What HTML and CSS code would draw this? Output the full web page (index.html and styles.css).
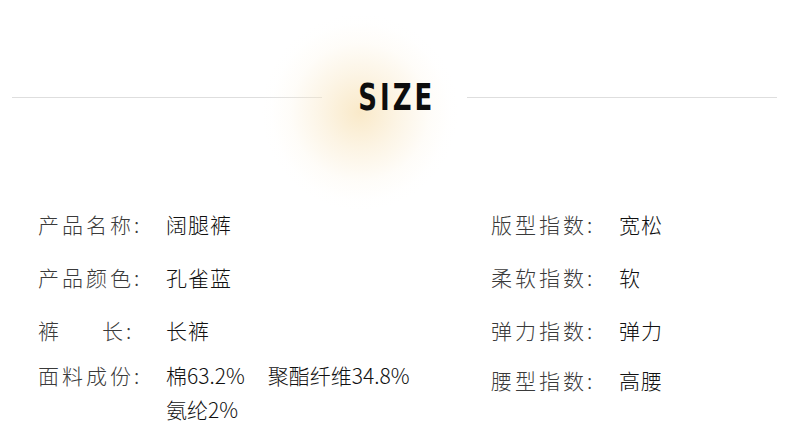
FILE: index.html
```html
<!DOCTYPE html>
<html lang="zh-CN">
<head>
<meta charset="utf-8">
<link rel="stylesheet" href="styles.css">
</head>
<body>
<div class="page">
  <header class="head">
    <span class="rule"></span>
    <div class="title-wrap">
      <span class="glow"></span>
      <h1 class="title">SIZE</h1>
    </div>
    <span class="rule"></span>
  </header>
  <section class="specs">
    <div class="col col-left">
      <div class="row r1"><span class="label">产品名称:</span><span class="value">阔腿裤</span></div>
      <div class="row r2"><span class="label">产品颜色:</span><span class="value">孔雀蓝</span></div>
      <div class="row r3"><span class="label"><span class="just">裤长</span>:</span><span class="value">长裤</span></div>
      <div class="row r4"><span class="label">面料成份:</span><span class="value multi"><span>棉63.2%</span><span>聚酯纤维34.8%</span><span>氨纶2%</span></span></div>
    </div>
    <div class="col col-right">
      <div class="row r1"><span class="label">版型指数:</span><span class="value">宽松</span></div>
      <div class="row r2"><span class="label">柔软指数:</span><span class="value">软</span></div>
      <div class="row r3"><span class="label">弹力指数:</span><span class="value">弹力</span></div>
      <div class="row r4b"><span class="label">腰型指数:</span><span class="value">高腰</span></div>
    </div>
  </section>
</div>
</body>
</html>
```

FILE: styles.css
```css
* { box-sizing: border-box; }
html, body { margin: 0; padding: 0; background: #fff; }
body { width: 790px; height: 439px; overflow: hidden; font-family: "Noto Sans CJK SC", "Noto Sans", sans-serif; }

.head {
  display: flex;
  align-items: center;
  height: 195px;
  padding: 0 13px 0 12px;
}
.rule {
  flex: 1;
  height: 1px;
  background: #dedede;
}
.title-wrap {
  position: relative;
  width: 145px;
  height: 195px;
  display: flex;
  align-items: center;
  justify-content: center;
}
.glow {
  position: absolute;
  left: -60px;
  top: 14px;
  width: 196px;
  height: 196px;
  border-radius: 50%;
  background: radial-gradient(circle at 50% 50%, rgba(247, 224, 178, 0.7) 0%, rgba(249, 232, 198, 0.45) 28%, rgba(252, 242, 222, 0.2) 50%, rgba(254, 250, 242, 0.06) 64%, rgba(255, 255, 255, 0) 72%);
}
.title {
  position: relative;
  margin: 0 0 2px 4px;
  font-family: "DejaVu Sans Condensed", "Liberation Sans Narrow", "Liberation Sans", sans-serif;
  font-weight: 700;
  font-size: 38px;
  letter-spacing: 4px;
  line-height: 1;
  color: #0d0d0d;
  transform: scaleX(0.76);
}

.specs {
  display: flex;
  padding-left: 38px;
}
.col { display: flex; flex-direction: column; }
.col-left { width: 453px; }
.col-right { flex: 1; }

.row {
  display: flex;
  align-items: flex-start;
  font-size: 21px;
  line-height: 34px;
  font-weight: 300;
}
.r1 { margin-top: 12px; }
.r2, .r3 { margin-top: 19px; }
.r4 { margin-top: 11px; }
.r4b { margin-top: 16px; }

.label {
  width: 128px;
  flex: none;
  color: #3a3a3a;
  display: flex;
  letter-spacing: 3px;
}
.just {
  display: inline-block;
  width: 88px;
  text-align: justify;
  text-align-last: justify;
}
.value { color: #111; letter-spacing: 1px; }
.multi {
  display: flex;
  flex-wrap: wrap;
  column-gap: 23px;
  width: 290px;
  line-height: 34px;
  letter-spacing: 0;
}
```
